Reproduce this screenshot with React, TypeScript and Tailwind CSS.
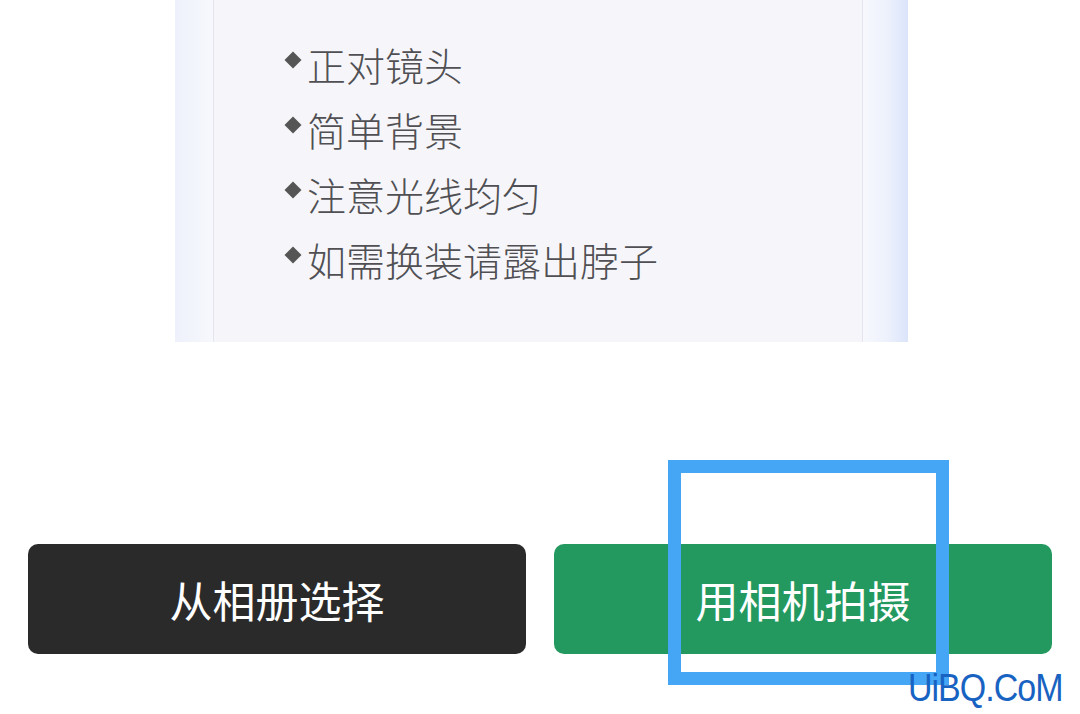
import React from "react";

const tips = ["正对镜头", "简单背景", "注意光线均匀", "如需换装请露出脖子"];

function Tip({ text }: { text: string }) {
  return (
    <div className="flex items-center h-[65px]">
      <span className="w-[12px] h-[12px] bg-[#555] rotate-45 mr-[8px] mt-[-10px] shrink-0" />
      <span>{text}</span>
    </div>
  );
}

export default function App() {
  return (
    <div className="relative w-[1080px] h-[714px] bg-white overflow-hidden font-['Noto_Sans_CJK_SC',sans-serif]">
      {/* 拍照提示卡片 */}
      <div className="ml-[175px] w-[733px] h-[342px] flex">
        <div className="w-[38px] bg-gradient-to-r from-[#eef1fb] to-[#f7f8fd]" />
        <div className="flex-1 bg-[#f6f6fa] border-x border-[#e4e5ee] pl-[73px] pt-[32px] text-[39px] leading-none font-light text-[#505054]">
          {tips.map((t) => (
            <Tip key={t} text={t} />
          ))}
        </div>
        <div className="w-[45px] bg-gradient-to-r from-[#f6f8fd] via-[#eef2fc] to-[#dbe4fa]" />
      </div>

      {/* 按钮 */}
      <div className="mt-[202px] px-[28px] flex gap-[28px]">
        <button className="flex-1 h-[110px] rounded-[10px] bg-[#2a2a2a] text-white text-[43px] font-normal flex items-center justify-center">
          从相册选择
        </button>
        <button className="flex-1 h-[110px] rounded-[10px] bg-[#23995f] text-white text-[43px] font-normal flex items-center justify-center">
          用相机拍摄
        </button>
      </div>

      {/* 标注框 */}
      <div className="absolute left-[668px] top-[460px] w-[281px] h-[225px] border-[13px] border-[#45a6f6]" />

      <div className="absolute left-[908px] top-[668px] text-[34px] leading-[44px] text-[#1863c2] font-['Liberation_Sans',sans-serif] tracking-[-1px] scale-y-[1.12] origin-bottom">
        UiBQ.CoM
      </div>
    </div>
  );
}
